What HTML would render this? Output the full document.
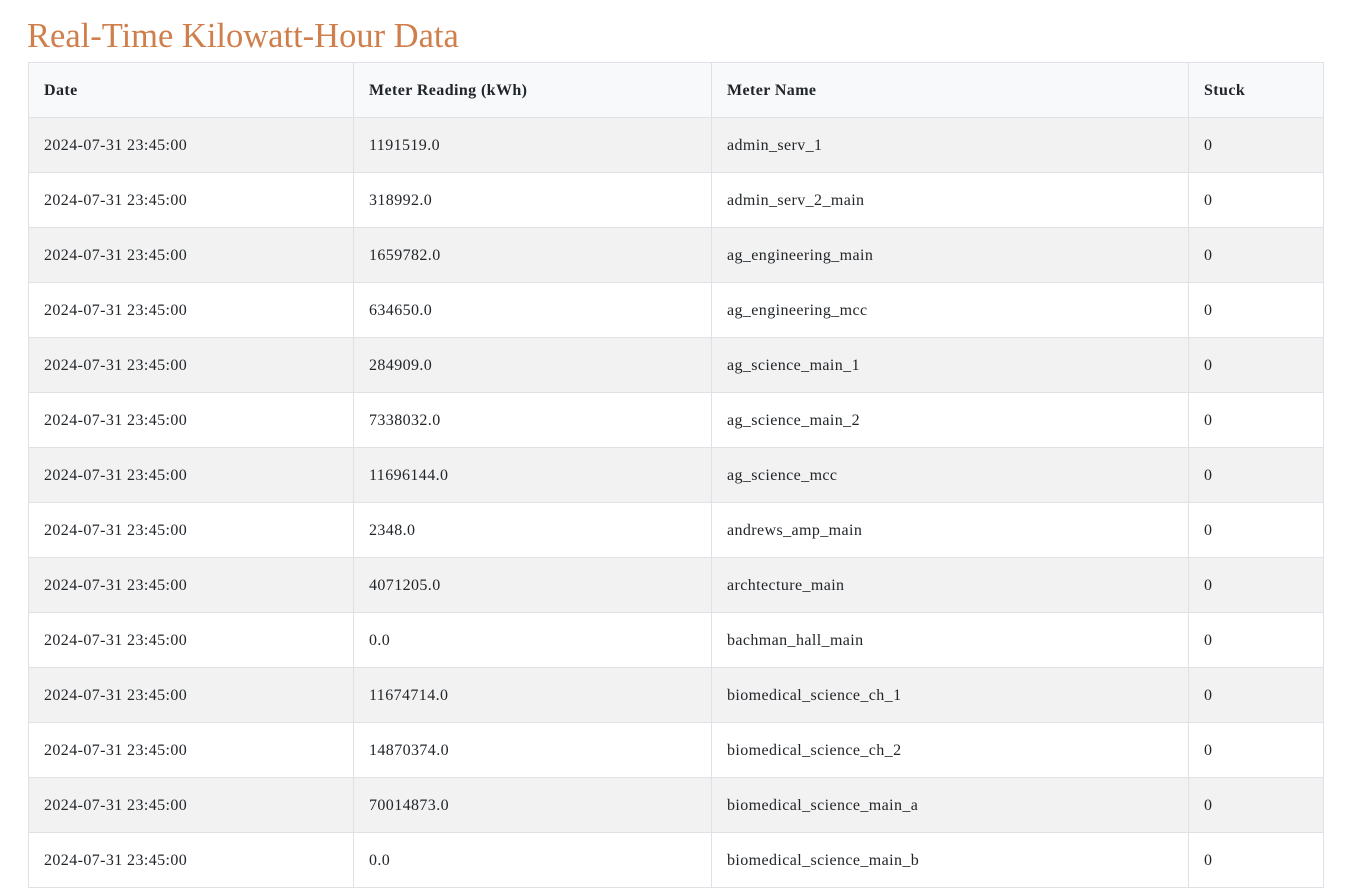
<!DOCTYPE html>
<html><head><meta charset="utf-8"><style>
body{margin:0;background:#fff;font-family:"Liberation Serif",serif;color:#212529;overflow:hidden;}
h1{position:absolute;left:27px;top:14px;margin:0;font-weight:normal;font-size:34.5px;color:#cf7f4c;line-height:44px;}
table{position:absolute;left:28px;top:62px;width:1296px;border-collapse:collapse;font-size:16px;letter-spacing:0.4px;}
td,th{border:1px solid #dee2e6;height:55px;padding:2px 15px 0 15px;box-sizing:border-box;text-align:left;}
th{background:#f8f9fa;font-weight:bold;}
tbody tr:nth-child(odd){background:#f2f2f2;}
</style></head><body>
<h1>Real-Time Kilowatt-Hour Data</h1>
<table>
<colgroup><col style="width:325px"><col style="width:358px"><col style="width:477px"><col></colgroup>
<thead><tr><th>Date</th><th>Meter Reading (kWh)</th><th>Meter Name</th><th>Stuck</th></tr></thead>
<tbody>
<tr><td>2024-07-31 23:45:00</td><td>1191519.0</td><td>admin_serv_1</td><td>0</td></tr>
<tr><td>2024-07-31 23:45:00</td><td>318992.0</td><td>admin_serv_2_main</td><td>0</td></tr>
<tr><td>2024-07-31 23:45:00</td><td>1659782.0</td><td>ag_engineering_main</td><td>0</td></tr>
<tr><td>2024-07-31 23:45:00</td><td>634650.0</td><td>ag_engineering_mcc</td><td>0</td></tr>
<tr><td>2024-07-31 23:45:00</td><td>284909.0</td><td>ag_science_main_1</td><td>0</td></tr>
<tr><td>2024-07-31 23:45:00</td><td>7338032.0</td><td>ag_science_main_2</td><td>0</td></tr>
<tr><td>2024-07-31 23:45:00</td><td>11696144.0</td><td>ag_science_mcc</td><td>0</td></tr>
<tr><td>2024-07-31 23:45:00</td><td>2348.0</td><td>andrews_amp_main</td><td>0</td></tr>
<tr><td>2024-07-31 23:45:00</td><td>4071205.0</td><td>archtecture_main</td><td>0</td></tr>
<tr><td>2024-07-31 23:45:00</td><td>0.0</td><td>bachman_hall_main</td><td>0</td></tr>
<tr><td>2024-07-31 23:45:00</td><td>11674714.0</td><td>biomedical_science_ch_1</td><td>0</td></tr>
<tr><td>2024-07-31 23:45:00</td><td>14870374.0</td><td>biomedical_science_ch_2</td><td>0</td></tr>
<tr><td>2024-07-31 23:45:00</td><td>70014873.0</td><td>biomedical_science_main_a</td><td>0</td></tr>
<tr><td>2024-07-31 23:45:00</td><td>0.0</td><td>biomedical_science_main_b</td><td>0</td></tr>
</tbody></table>
</body></html>
